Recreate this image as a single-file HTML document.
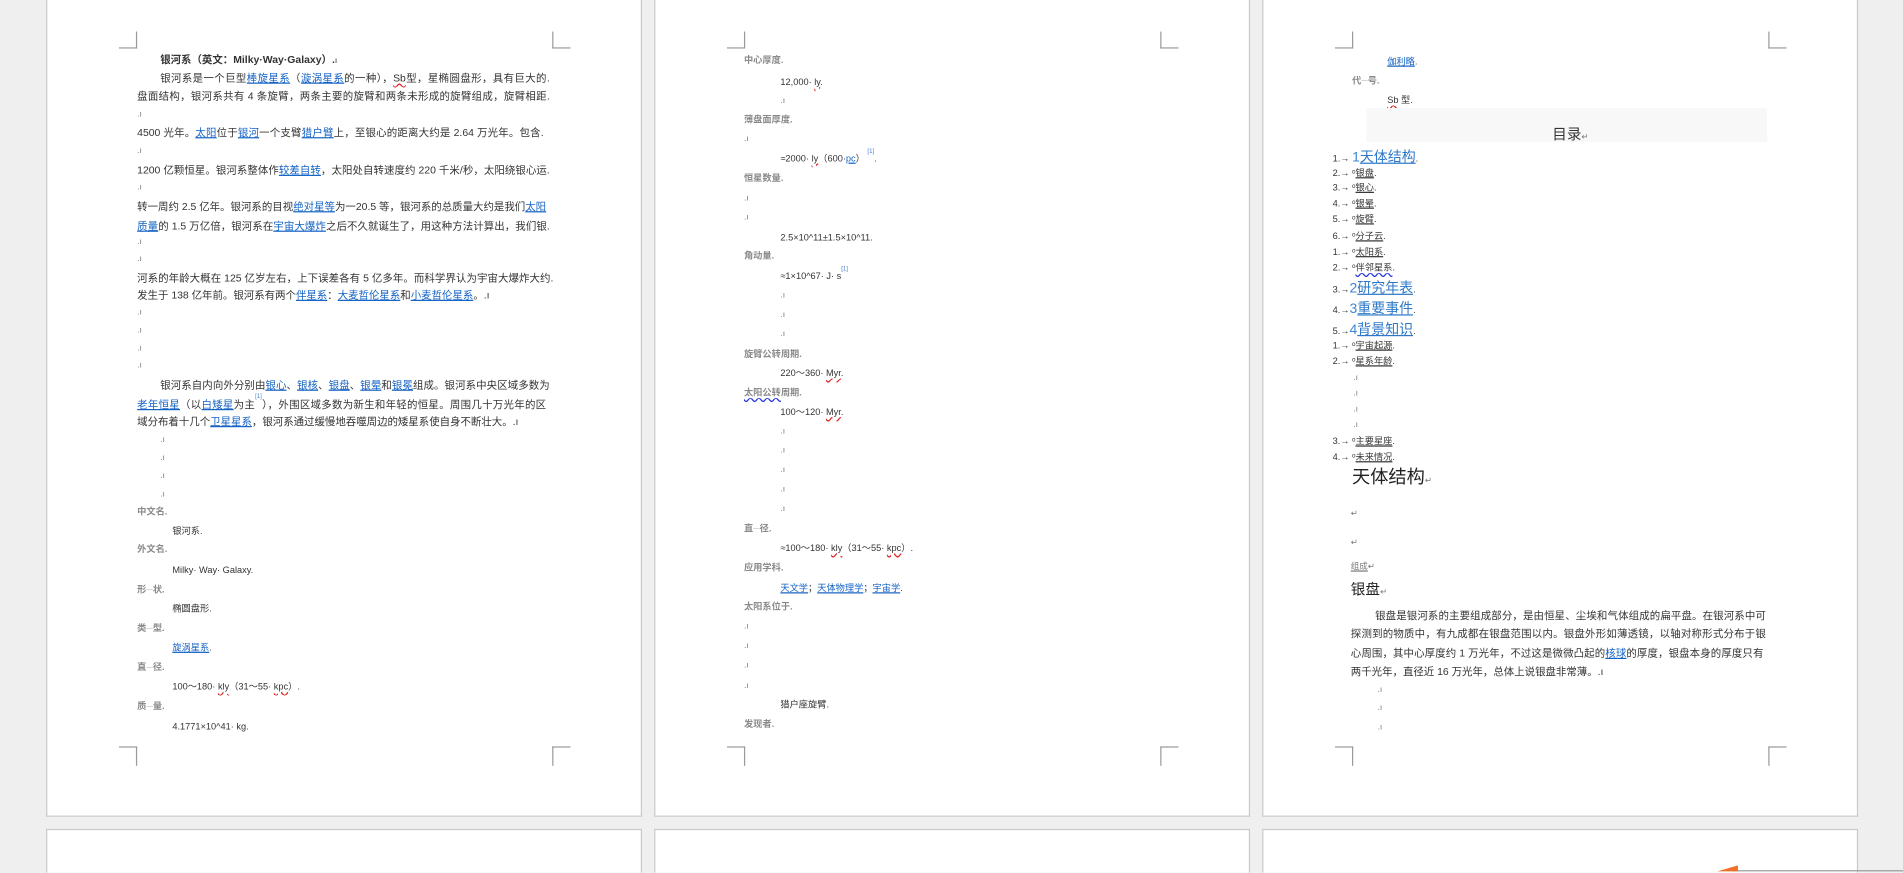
<!DOCTYPE html>
<html><head><meta charset="utf-8">
<style>
html,body{margin:0;padding:0;}
body{width:1903px;height:873px;overflow:hidden;background:#efefef;font-family:"Liberation Sans","Noto Sans CJK SC",sans-serif;position:relative;}
#w{position:absolute;left:0;top:0;width:1568px;height:719px;transform:scale(1.21365);transform-origin:0 0;overflow:hidden;}
.pg{position:absolute;background:#fff;border:1px solid #c9c9c9;border-top:none;}
.t{position:absolute;font-size:8.6px;line-height:12px;color:#333;white-space:nowrap;}
.j{text-align:justify;text-align-last:justify;width:340px;}
.g{color:#8a8a8a;font-weight:bold;font-size:7.6px;}
.m{color:#777;font-size:7px;}
a,.a{color:#1463c4;text-decoration:underline;}
.w{text-decoration:underline wavy #e02020;text-underline-offset:1px;}
.wb{text-decoration:underline wavy #2030e0;}
.c{position:absolute;border-color:#9a9a9a;border-style:solid;border-width:0;}
.big{color:#3d86d6;font-size:11.5px;}
.u{text-decoration:underline;color:#333;}
.sp{font-size:5px;color:#4a7fd0;line-height:0;vertical-align:top;}
</style></head><body><div id="w">
<div class="pg" style="left:38px;top:-1px;width:489px;height:673px"></div>
<div class="pg" style="left:539px;top:-1px;width:489px;height:673px"></div>
<div class="pg" style="left:1040px;top:-1px;width:489px;height:673px"></div>
<div class="pg" style="left:38px;top:683px;width:489px;height:36px;border-top:1px solid #c9c9c9;border-bottom:none"></div>
<div class="pg" style="left:539px;top:683px;width:489px;height:36px;border-top:1px solid #c9c9c9;border-bottom:none"></div>
<div class="pg" style="left:1040px;top:683px;width:489px;height:36px;border-top:1px solid #c9c9c9;border-bottom:none"></div>
<div style="position:absolute;left:1428px;top:717px;width:140px;height:1px;background:#999"></div>
<div style="position:absolute;left:1415px;top:713px;width:0;height:0;border-left:17px solid transparent;border-bottom:5px solid #f0702a"></div>

<div class="c" style="left:98px;top:26px;width:14px;height:13px;border-right-width:1px;border-bottom-width:1px"></div>
<div class="c" style="left:455px;top:26px;width:14px;height:13px;border-left-width:1px;border-bottom-width:1px"></div>
<div class="c" style="left:98px;top:615px;width:14px;height:15px;border-right-width:1px;border-top-width:1px"></div>
<div class="c" style="left:455px;top:615px;width:14px;height:15px;border-left-width:1px;border-top-width:1px"></div>
<div class="c" style="left:599px;top:26px;width:14px;height:13px;border-right-width:1px;border-bottom-width:1px"></div>
<div class="c" style="left:956px;top:26px;width:14px;height:13px;border-left-width:1px;border-bottom-width:1px"></div>
<div class="c" style="left:599px;top:615px;width:14px;height:15px;border-right-width:1px;border-top-width:1px"></div>
<div class="c" style="left:956px;top:615px;width:14px;height:15px;border-left-width:1px;border-top-width:1px"></div>
<div class="c" style="left:1100px;top:26px;width:14px;height:13px;border-right-width:1px;border-bottom-width:1px"></div>
<div class="c" style="left:1457px;top:26px;width:14px;height:13px;border-left-width:1px;border-bottom-width:1px"></div>
<div class="c" style="left:1100px;top:615px;width:14px;height:15px;border-right-width:1px;border-top-width:1px"></div>
<div class="c" style="left:1457px;top:615px;width:14px;height:15px;border-left-width:1px;border-top-width:1px"></div>

<!-- PAGE 1 -->
<div class="t" style="left:132px;top:43px;font-weight:bold">银河系（英文：Milky·Way·Galaxy）.<span class="m">ı</span></div>
<div class="t j" style="left:132px;top:58px;width:321px">银河系是一个巨型<a>棒旋星系</a>（<a>漩涡星系</a>的一种），<span class="w">Sb</span>型，星椭圆盘形，具有巨大的.</div>
<div class="t j" style="left:113px;top:73px">盘面结构，银河系共有 4 条旋臂，两条主要的旋臂和两条未形成的旋臂组成，旋臂相距.</div>
<div class="t m" style="left:113px;top:89px">.ı</div>
<div class="t j" style="left:113px;top:103px;width:335px">4500 光年。<a>太阳</a>位于<a>银河</a>一个支臂<a>猎户臂</a>上，至银心的距离大约是 2.64 万光年。包含.</div>
<div class="t m" style="left:113px;top:119px">.ı</div>
<div class="t j" style="left:113px;top:134px">1200 亿颗恒星。银河系整体作<a>较差自转</a>，太阳处自转速度约 220 千米/秒，太阳绕银心运.</div>
<div class="t m" style="left:113px;top:149px">.ı</div>
<div class="t j" style="left:113px;top:164px;width:337px">转一周约 2.5 亿年。银河系的目视<a>绝对星等</a>为一20.5 等，银河系的总质量大约是我们<a>太阳</a></div>
<div class="t j" style="left:113px;top:180px"><a>质量</a>的 1.5 万亿倍，银河系在<a>宇宙大爆炸</a>之后不久就诞生了，用这种方法计算出，我们银.</div>
<div class="t m" style="left:113px;top:194px">.ı</div>
<div class="t m" style="left:113px;top:208px">.ı</div>
<div class="t j" style="left:113px;top:223px;width:343px">河系的年龄大概在 125 亿岁左右，上下误差各有 5 亿多年。而科学界认为宇宙大爆炸大约.</div>
<div class="t" style="left:113px;top:237px">发生于 138 亿年前。银河系有两个<a>伴星系</a>：<a>大麦哲伦星系</a>和<a>小麦哲伦星系</a>。.ı</div>
<div class="t m" style="left:113px;top:252px">.ı</div>
<div class="t m" style="left:113px;top:267px">.ı</div>
<div class="t m" style="left:113px;top:282px">.ı</div>
<div class="t m" style="left:113px;top:296px">.ı</div>
<div class="t j" style="left:132px;top:311px;width:321px">银河系自内向外分别由<a>银心</a>、<a>银核</a>、<a>银盘</a>、<a>银晕</a>和<a>银冕</a>组成。银河系中央区域多数为</div>
<div class="t j" style="left:113px;top:327px;width:337px"><a>老年恒星</a>（以<a>白矮星</a>为主<span class="sp">[1]</span>），外围区域多数为新生和年轻的恒星。周围几十万光年的区</div>
<div class="t" style="left:113px;top:341px">域分布着十几个<a>卫星星系</a>，银河系通过缓慢地吞噬周边的矮星系使自身不断壮大。.ı</div>
<div class="t m" style="left:132px;top:357px">.ı</div>
<div class="t m" style="left:132px;top:372px">.ı</div>
<div class="t m" style="left:132px;top:387px">.ı</div>
<div class="t m" style="left:132px;top:402px">.ı</div>
<div class="t g" style="left:113px;top:416px">中文名.</div>
<div class="t" style="left:142px;top:432px;font-size:7.6px">银河系.</div>
<div class="t g" style="left:113px;top:447px">外文名.</div>
<div class="t" style="left:142px;top:464px;font-size:7.6px">Milky· Way· Galaxy.</div>
<div class="t g" style="left:113px;top:480px">形<span style="font-size:4px">ˉˉˉˉ</span>状.</div>
<div class="t" style="left:142px;top:496px;font-size:7.6px">椭圆盘形.</div>
<div class="t g" style="left:113px;top:512px">类<span style="font-size:4px">ˉˉˉˉ</span>型.</div>
<div class="t" style="left:142px;top:528px;font-size:7.6px"><a>旋涡星系</a>.</div>
<div class="t g" style="left:113px;top:544px">直<span style="font-size:4px">ˉˉˉˉ</span>径.</div>
<div class="t" style="left:142px;top:560px;font-size:7.6px">100～180· <span class="w">kly</span>（31～55· <span class="w">kpc</span>）.</div>
<div class="t g" style="left:113px;top:576px">质<span style="font-size:4px">ˉˉˉˉ</span>量.</div>
<div class="t" style="left:142px;top:593px;font-size:7.6px">4.1771×10^41· kg.</div>

<!-- PAGE 2 -->
<div class="t g" style="left:613px;top:44px">中心厚度.</div>
<div class="t" style="left:643px;top:62px;font-size:7.6px">12,000· <span class="w">ly</span>.</div>
<div class="t m" style="left:643px;top:78px">.ı</div>
<div class="t g" style="left:613px;top:93px">薄盘面厚度.</div>
<div class="t m" style="left:613px;top:109px">.ı</div>
<div class="t" style="left:643px;top:125px;font-size:7.6px">≈2000· <span class="w">ly</span>（600·<a>pc</a>） <span class="sp">[1]</span>.</div>
<div class="t g" style="left:613px;top:141px">恒星数量.</div>
<div class="t m" style="left:613px;top:158px">.ı</div>
<div class="t m" style="left:613px;top:174px">.ı</div>
<div class="t" style="left:643px;top:190px;font-size:7.6px">2.5×10^11±1.5×10^11.</div>
<div class="t g" style="left:613px;top:205px">角动量.</div>
<div class="t" style="left:643px;top:222px;font-size:7.6px">≈1×10^67· J· s<span class="sp">[1]</span></div>
<div class="t m" style="left:643px;top:238px">.ı</div>
<div class="t m" style="left:643px;top:254px">.ı</div>
<div class="t m" style="left:643px;top:270px">.ı</div>
<div class="t g" style="left:613px;top:286px">旋臂公转周期.</div>
<div class="t" style="left:643px;top:302px;font-size:7.6px">220～360· <span class="w">Myr</span>.</div>
<div class="t g" style="left:613px;top:318px"><span class="wb">太阳公转</span>周期.</div>
<div class="t" style="left:643px;top:334px;font-size:7.6px">100～120· <span class="w">Myr</span>.</div>
<div class="t m" style="left:643px;top:350px">.ı</div>
<div class="t m" style="left:643px;top:366px">.ı</div>
<div class="t m" style="left:643px;top:382px">.ı</div>
<div class="t m" style="left:643px;top:398px">.ı</div>
<div class="t m" style="left:643px;top:414px">.ı</div>
<div class="t g" style="left:613px;top:430px">直<span style="font-size:4px">ˉˉˉˉ</span>径.</div>
<div class="t" style="left:643px;top:446px;font-size:7.6px">≈100～180· <span class="w">kly</span>（31～55· <span class="w">kpc</span>）.</div>
<div class="t g" style="left:613px;top:462px">应用学科.</div>
<div class="t" style="left:643px;top:479px;font-size:7.6px"><a>天文学</a>；<a>天体物理学</a>；<a>宇宙学</a>.</div>
<div class="t g" style="left:613px;top:494px">太阳系位于.</div>
<div class="t m" style="left:613px;top:511px">.ı</div>
<div class="t m" style="left:613px;top:527px">.ı</div>
<div class="t m" style="left:613px;top:543px">.ı</div>
<div class="t m" style="left:613px;top:560px">.ı</div>
<div class="t" style="left:643px;top:575px;font-size:7.6px">猎户座旋臂.</div>
<div class="t g" style="left:613px;top:591px">发现者.</div>

<!-- PAGE 3 -->
<div class="t" style="left:1143px;top:45px;font-size:7.6px"><a>伽利略</a>.</div>
<div class="t g" style="left:1114px;top:61px">代<span style="font-size:4px">ˉˉˉˉ</span>号.</div>
<div class="t" style="left:1143px;top:77px;font-size:7.6px"><span class="w">Sb</span> 型.</div>
<div style="position:absolute;left:1126px;top:89px;width:330px;height:28px;background:#f8f8f8"></div>
<div class="t" style="left:1279px;top:104px;font-size:12px;line-height:14px">目录<span class="m">↵</span></div>
<div class="t" style="left:1098px;top:124px;font-size:7.6px">1.→ <span class="big">1<a style="color:#2e78c8">天体结构</a></span>.</div>
<div class="t" style="left:1098px;top:137px;font-size:7.6px">2.→ ᵒ<span class="u">银盘</span>.</div>
<div class="t" style="left:1098px;top:149px;font-size:7.6px">3.→ ᵒ<span class="u">银心</span>.</div>
<div class="t" style="left:1098px;top:162px;font-size:7.6px">4.→ ᵒ<span class="u">银晕</span>.</div>
<div class="t" style="left:1098px;top:175px;font-size:7.6px">5.→ ᵒ<span class="u">旋臂</span>.</div>
<div class="t" style="left:1098px;top:189px;font-size:7.6px">6.→ ᵒ<span class="u">分子云</span>.</div>
<div class="t" style="left:1098px;top:202px;font-size:7.6px">1.→ ᵒ<span class="u">太阳系</span>.</div>
<div class="t" style="left:1098px;top:215px;font-size:7.6px">2.→ ᵒ<span class="wb">伴邻星系</span>.</div>
<div class="t" style="left:1098px;top:232px;font-size:7.6px">3.→<span class="big">2<a style="color:#2e78c8">研究年表</a></span>.</div>
<div class="t" style="left:1098px;top:249px;font-size:7.6px">4.→<span class="big">3<a style="color:#2e78c8">重要事件</a></span>.</div>
<div class="t" style="left:1098px;top:266px;font-size:7.6px">5.→<span class="big">4<a style="color:#2e78c8">背景知识</a></span>.</div>
<div class="t" style="left:1098px;top:279px;font-size:7.6px">1.→ ᵒ<span class="u">宇宙起源</span>.</div>
<div class="t" style="left:1098px;top:292px;font-size:7.6px">2.→ ᵒ<span class="u">星系年龄</span>.</div>
<div class="t m" style="left:1115px;top:306px">.ı</div>
<div class="t m" style="left:1115px;top:319px">.ı</div>
<div class="t m" style="left:1115px;top:332px">.ı</div>
<div class="t m" style="left:1115px;top:345px">.ı</div>
<div class="t" style="left:1098px;top:358px;font-size:7.6px">3.→ ᵒ<span class="u">主要星座</span>.</div>
<div class="t" style="left:1098px;top:371px;font-size:7.6px">4.→ ᵒ<span class="u">未来情况</span>.</div>
<div class="t" style="left:1114px;top:385px;font-size:15px;line-height:18px;color:#222">天体结构<span class="m">↵</span></div>
<div class="t m" style="left:1113px;top:418px">↵</div>
<div class="t m" style="left:1113px;top:442px">↵</div>
<div class="t" style="left:1113px;top:462px;font-size:7px;color:#777"><span style="text-decoration:underline">组成</span>↵</div>
<div class="t" style="left:1113px;top:479px;font-size:12px;line-height:15px;color:#222">银盘<span class="m">↵</span></div>
<div class="t j" style="left:1133px;top:501px;width:322px">银盘是银河系的主要组成部分，是由恒星、尘埃和气体组成的扁平盘。在银河系中可</div>
<div class="t j" style="left:1113px;top:516px;width:342px">探测到的物质中，有九成都在银盘范围以内。银盘外形如薄透镜，以轴对称形式分布于银</div>
<div class="t j" style="left:1113px;top:532px;width:340px">心周围，其中心厚度约 1 万光年，不过这是微微凸起的<a>核球</a>的厚度，银盘本身的厚度只有</div>
<div class="t" style="left:1113px;top:547px">两千光年，直径近 16 万光年，总体上说银盘非常薄。.ı</div>
<div class="t m" style="left:1135px;top:563px">.ı</div>
<div class="t m" style="left:1135px;top:578px">.ı</div>
<div class="t m" style="left:1135px;top:594px">.ı</div>
</div></body></html>
